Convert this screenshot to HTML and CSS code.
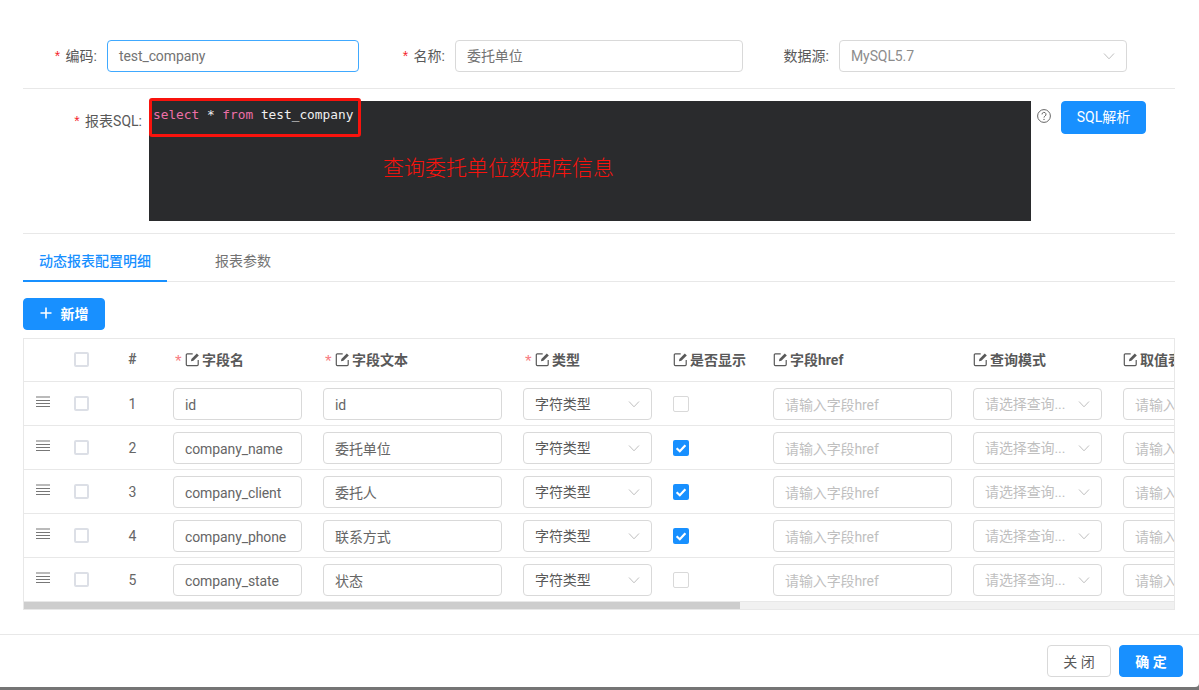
FILE: index.html
```html
<!DOCTYPE html>
<html lang="zh">
<head>
<meta charset="utf-8">
<title>报表配置</title>
<link rel="stylesheet" href="styles.css">
</head>
<body>
<svg class="sprite" width="0" height="0">
  <symbol id="edit" viewBox="0 0 15 15"><path d="M13.2 8v4.6a1 1 0 0 1-1 1H2.3a1 1 0 0 1-1-1V2.8a1 1 0 0 1 1-1h5.4" fill="none" stroke="currentColor" stroke-width="1.2"/><path d="M6 9.2 6.4 7 11.8 1.4 13.8 3.4 8.4 8.8z" fill="currentColor"/></symbol>
  <symbol id="down" viewBox="0 0 12 12"><path d="M1 3.5 6 8.8 11 3.5" fill="none" stroke="currentColor" stroke-width="1"/></symbol>
  <symbol id="drag" viewBox="0 0 14 12"><path d="M0 1h14M0 4.5h14M0 7.5h14M0 10.5h14" stroke="currentColor" stroke-width="1.2"/></symbol>
  <symbol id="tick" viewBox="0 0 16 16"><path d="M3.6 8.2 6.8 11.2 12.4 5.2" fill="none" stroke="#fff" stroke-width="2.2"/></symbol>
</svg>
<div class="modal">
  <div class="form-top">
    <label class="lbl"><span class="req">*</span> 编码:</label>
    <div class="field focus">test_company</div>
    <label class="lbl"><span class="req">*</span> 名称:</label>
    <div class="field">委托单位</div>
    <label class="lbl">数据源:</label>
    <div class="field select muted">MySQL5.7<svg class="chev"><use href="#down"/></svg></div>
  </div>
  <div class="form-sql">
    <label class="lbl sql-lbl"><span class="req">*</span> 报表SQL:</label>
    <div class="editor">
      <code class="code"><span class="kw">select</span> * <span class="kw">from</span> test_company</code>
      <div class="redbox"></div>
      <div class="note">查询委托单位数据库信息</div>
    </div>
    <svg class="help" width="16" height="16" viewBox="0 0 16 16"><circle cx="8" cy="8" r="6.4" fill="none" stroke="#666" stroke-width="1"/><path d="M6 6.4a2 2 0 1 1 3 1.7c-.7.4-1 .8-1 1.5" fill="none" stroke="#666" stroke-width="1"/><circle cx="8" cy="11.4" r=".7" fill="#666"/></svg>
    <button class="btn primary parse">SQL解析</button>
  </div>
  <div class="tabs">
    <div class="tab active">动态报表配置明细</div>
    <div class="tab">报表参数</div>
  </div>
  <button class="btn primary add"><svg width="12" height="12" viewBox="0 0 12 12"><path d="M6 .5v11M.5 6h11" stroke="#fff" stroke-width="1.6"/></svg><span>新增</span></button>
  <div class="table">
    <div class="row head">
      <div></div>
      <div class="c"><span class="box"></span></div>
      <div class="c num">#</div>
      <div class="th"><span class="star">*</span><svg class="ed"><use href="#edit"/></svg>字段名</div>
      <div class="th"><span class="star">*</span><svg class="ed"><use href="#edit"/></svg>字段文本</div>
      <div class="th"><span class="star">*</span><svg class="ed"><use href="#edit"/></svg>类型</div>
      <div class="th"><svg class="ed"><use href="#edit"/></svg>是否显示</div>
      <div class="th"><svg class="ed"><use href="#edit"/></svg>字段href</div>
      <div class="th"><svg class="ed"><use href="#edit"/></svg>查询模式</div>
      <div class="th"><svg class="ed"><use href="#edit"/></svg>取值表达式</div>
    </div>
    <div class="row">
      <div class="c"><svg class="drag"><use href="#drag"/></svg></div>
      <div class="c"><span class="box"></span></div>
      <div class="c num">1</div>
      <div class="td"><div class="field">id</div></div>
      <div class="td"><div class="field">id</div></div>
      <div class="td"><div class="field select">字符类型<svg class="chev"><use href="#down"/></svg></div></div>
      <div class="td"><span class="chk"></span></div>
      <div class="td"><div class="field ph">请输入字段href</div></div>
      <div class="td"><div class="field select ph">请选择查询...<svg class="chev"><use href="#down"/></svg></div></div>
      <div class="td"><div class="field ph">请输入取值表达式</div></div>
    </div>
    <div class="row">
      <div class="c"><svg class="drag"><use href="#drag"/></svg></div>
      <div class="c"><span class="box"></span></div>
      <div class="c num">2</div>
      <div class="td"><div class="field">company_name</div></div>
      <div class="td"><div class="field">委托单位</div></div>
      <div class="td"><div class="field select">字符类型<svg class="chev"><use href="#down"/></svg></div></div>
      <div class="td"><span class="chk on"><svg class="tick"><use href="#tick"/></svg></span></div>
      <div class="td"><div class="field ph">请输入字段href</div></div>
      <div class="td"><div class="field select ph">请选择查询...<svg class="chev"><use href="#down"/></svg></div></div>
      <div class="td"><div class="field ph">请输入取值表达式</div></div>
    </div>
    <div class="row">
      <div class="c"><svg class="drag"><use href="#drag"/></svg></div>
      <div class="c"><span class="box"></span></div>
      <div class="c num">3</div>
      <div class="td"><div class="field">company_client</div></div>
      <div class="td"><div class="field">委托人</div></div>
      <div class="td"><div class="field select">字符类型<svg class="chev"><use href="#down"/></svg></div></div>
      <div class="td"><span class="chk on"><svg class="tick"><use href="#tick"/></svg></span></div>
      <div class="td"><div class="field ph">请输入字段href</div></div>
      <div class="td"><div class="field select ph">请选择查询...<svg class="chev"><use href="#down"/></svg></div></div>
      <div class="td"><div class="field ph">请输入取值表达式</div></div>
    </div>
    <div class="row">
      <div class="c"><svg class="drag"><use href="#drag"/></svg></div>
      <div class="c"><span class="box"></span></div>
      <div class="c num">4</div>
      <div class="td"><div class="field">company_phone</div></div>
      <div class="td"><div class="field">联系方式</div></div>
      <div class="td"><div class="field select">字符类型<svg class="chev"><use href="#down"/></svg></div></div>
      <div class="td"><span class="chk on"><svg class="tick"><use href="#tick"/></svg></span></div>
      <div class="td"><div class="field ph">请输入字段href</div></div>
      <div class="td"><div class="field select ph">请选择查询...<svg class="chev"><use href="#down"/></svg></div></div>
      <div class="td"><div class="field ph">请输入取值表达式</div></div>
    </div>
    <div class="row">
      <div class="c"><svg class="drag"><use href="#drag"/></svg></div>
      <div class="c"><span class="box"></span></div>
      <div class="c num">5</div>
      <div class="td"><div class="field">company_state</div></div>
      <div class="td"><div class="field">状态</div></div>
      <div class="td"><div class="field select">字符类型<svg class="chev"><use href="#down"/></svg></div></div>
      <div class="td"><span class="chk"></span></div>
      <div class="td"><div class="field ph">请输入字段href</div></div>
      <div class="td"><div class="field select ph">请选择查询...<svg class="chev"><use href="#down"/></svg></div></div>
      <div class="td"><div class="field ph">请输入取值表达式</div></div>
    </div>
    <div class="scrollbar"><div class="thumb"></div></div>
  </div>
  <div class="footer">
    <button class="btn plain">关 闭</button>
    <button class="btn primary">确 定</button>
  </div>
</div>
</body>
</html>
```

FILE: styles.css
```css
* { box-sizing: border-box; }
html, body { margin: 0; height: 100%; }
body {
  background: #757575;
  overflow: hidden;
  font-family: Roboto, "Noto Sans CJK SC", sans-serif;
  font-size: 14px;
  color: #595959;
}
.sprite { position: absolute; }
.modal {
  width: 1199px;
  height: 687px;
  background: #fff;
  border-radius: 0 0 4px 0;
  padding-top: 40px;
}
.form-top {
  display: grid;
  grid-template-columns: 84px 252px 96px 288px 96px 288px;
  align-items: center;
  margin: 0 24px 0 23px;
  padding-bottom: 16px;
  border-bottom: 1px solid #e8e8e8;
  height: 49px;
}
.lbl {
  text-align: right;
  padding-right: 10px;
  color: #595959;
  line-height: 32px;
}
.req { color: #f5222d; font-family: "Liberation Sans", sans-serif; margin-right: 2px; }
.field {
  height: 32px;
  line-height: 30px;
  padding: 0 11px;
  border: 1px solid #d9d9d9;
  border-radius: 4px;
  background: #fff;
  color: #737373;
  letter-spacing: -.1px;
  white-space: nowrap;
  overflow: hidden;
}
.focus { border-color: #40a9ff; }
.muted { color: #8c8c8c; }
.ph { color: #bfbfbf; }
.select { position: relative; }
.chev {
  position: absolute;
  right: 11px;
  top: 9px;
  width: 12px;
  height: 12px;
  color: #bfbfbf;
}
.form-sql {
  display: flex;
  align-items: flex-start;
  margin: 0 24px 0 23px;
  padding: 12px 0;
  height: 145px;
  border-bottom: 1px solid #e8e8e8;
}
.sql-lbl { width: 126px; flex: none; line-height: 40px; padding-right: 7px; }
.editor {
  position: relative;
  width: 882px;
  height: 120px;
  background: #2a2b2d;
  flex: none;
}
.code {
  display: block;
  padding: 6px 0 0 4px;
  font-family: "DejaVu Sans Mono", monospace;
  font-size: 12.8px;
  line-height: 15px;
  color: #f0f0f0;
}
.kw { color: #ee6fa8; }
.redbox {
  position: absolute;
  left: 0;
  top: -3px;
  width: 212px;
  height: 39px;
  border: 3px solid #f8130d;
  border-radius: 3px;
}
.note {
  position: absolute;
  left: 234px;
  top: 52px;
  font-size: 21px;
  font-weight: 300;
  line-height: 30px;
  color: #f8130d;
}
.help { margin: 7px 0 0 5px; flex: none; }
.btn {
  font-family: inherit;
  font-size: 14px;
  height: 32px;
  padding: 0;
  border-radius: 4px;
  border: 1px solid #d9d9d9;
  background: #fff;
  color: #595959;
}
.primary { background: #1890ff; border-color: #1890ff; color: #fff; }
.parse { width: 85px; height: 33px; margin-left: 9px; padding-bottom: 3px; flex: none; }
.tabs {
  display: flex;
  margin: 0 24px 0 23px;
  height: 48px;
  border-bottom: 1px solid #e8e8e8;
}
.tab {
  padding: 0 16px;
  margin-right: 32px;
  line-height: 54px;
  height: 48px;
  color: #737373;
}
.tab.active {
  color: #1890ff;
  font-weight: 500;
  border-bottom: 2px solid #1890ff;
}
.add {
  display: flex;
  align-items: center;
  justify-content: center;
  gap: 9px;
  width: 82px;
  margin: 16px 0 8px 23px;
  padding-bottom: 2px;
  font-weight: 700;
}
.table {
  margin: 0 24px 0 23px;
  width: 1152px;
  height: 272px;
  border: 1px solid #e8e8e8;
  overflow: hidden;
}
.row {
  display: grid;
  grid-template-columns: 40px 35px 64px 150px 200px 150px 100px 200px 150px 200px;
  height: 44px;
  border-bottom: 1px solid #e8e8e8;
  width: 1289px;
}
.head { height: 43px; font-weight: 700; align-items: center; padding-bottom: 2px; }
.c { display: flex; justify-content: center; align-items: center; height: 100%; }
.num { padding-left: 3px; color: #666; }
.th {
  display: flex;
  align-items: center;
  padding-left: 10px;
  color: #595959;
  white-space: nowrap;
}
.star { color: #f5222d; opacity: .6; font-weight: 400; width: 12px; padding: 6px 0 0 2px; font-family: "Liberation Sans", sans-serif; font-size: 17px; }
.ed { width: 15px; height: 15px; margin-right: 2px; color: #595959; flex: none; }
.td { padding: 6px 11px 0 10px; }
.td .field { line-height: 32px; color: #666; }
.td .select { line-height: 30px; color: #595959; }
.td .ph { color: #bfbfbf; }
.box {
  display: block;
  width: 15px;
  height: 15px;
  border: 2px solid #dcdfe6;
  border-radius: 2px;
}
.drag { width: 14px; height: 12px; color: #777; margin: -3px 2px 0 0; }
.chk {
  display: block;
  width: 16px;
  height: 16px;
  margin-top: 8px;
  border: 1px solid #d9d9d9;
  border-radius: 2px;
  overflow: hidden;
}
.chk.on { background: #1890ff; border: 0; }
.tick { display: block; width: 16px; height: 16px; }
.scrollbar { height: 7px; background: #f1f1f1; }
.thumb { width: 716px; height: 7px; background: #cdcdcd; }
.footer {
  display: flex;
  justify-content: flex-end;
  gap: 8px;
  margin-top: 24px;
  padding: 10px 16px 0 0;
  border-top: 1px solid #e8e8e8;
}
.footer .btn { width: 64px; }
.footer .primary { font-weight: 700; }
```
